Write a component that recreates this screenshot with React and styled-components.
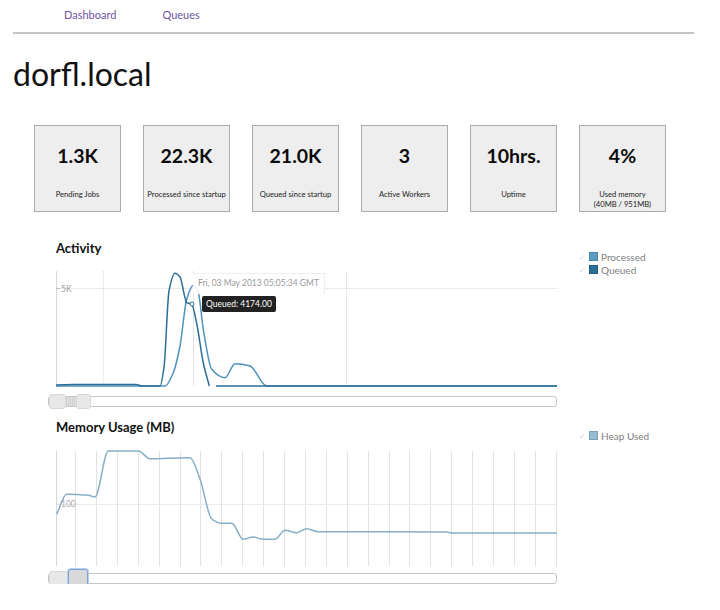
import React from "react";
import styled, { createGlobalStyle } from "styled-components";

const Global = createGlobalStyle`
    body {
        margin: 0;
        background: #fff;
        font-family: Lato, "Open Sans", sans-serif;
        color: #111;
    }
`;

const Page = styled.div`
    width: 681px;
    padding-left: 13px;
`;

const Nav = styled.nav`
    display: flex;
    height: 32px;
    align-items: center;
    padding-left: 51px;
    gap: 46px;
    border-bottom: 2px solid #c4c4c4;
    a {
        font-size: 11px;
        color: #6d54a1;
        text-decoration: none;
        margin-top: -3px;
    }
`;

const Title = styled.h1`
    margin: 20px 0 0;
    font-size: 32px;
    font-weight: 400;
    line-height: 40px;
    color: #111;
`;

const Stats = styled.div`
    display: flex;
    gap: 22px;
    margin: 31px 0 0 21px;
`;

const Card = styled.div`
    width: 87px;
    height: 87px;
    box-sizing: border-box;
    background: #eeeeee;
    border: 1px solid #ababab;
    display: flex;
    flex-direction: column;
    align-items: center;
    text-align: center;
    .value {
        font-size: 19.5px;
        font-weight: 700;
        margin-top: 19px;
        line-height: 22px;
        color: #0c0c0c;
    }
    .label {
        font-size: 7.6px;
        line-height: 10px;
        margin-top: 22px;
        color: #222;
    }
`;

const Section = styled.section`
    display: flex;
    margin: ${(p) => p.top}px 0 0 43px;
`;

const Main = styled.div`
    width: 501px;
`;

const Heading = styled.h3`
    margin: 0;
    font-size: 13px;
    font-weight: 700;
    line-height: 16px;
`;

const ChartBox = styled.div`
    position: relative;
    height: 116px;
    margin-top: ${(p) => p.gap}px;
    svg {
        display: block;
        overflow: visible;
    }
`;

const DateTip = styled.div`
    position: absolute;
    left: 137px;
    top: 2px;
    padding: 0 5px;
    height: 20px;
    line-height: 19px;
    font-size: 8.5px;
    color: #999;
    background: rgba(255, 255, 255, 0.9);
    border-top: 1px solid #eee;
    border-right: 1px solid #eee;
    white-space: nowrap;
`;

const ValueTip = styled.div`
    position: absolute;
    left: 146px;
    top: 25px;
    height: 16px;
    padding: 0 4px;
    line-height: 16px;
    font-size: 8.5px;
    color: #fff;
    background: #222;
    border-radius: 2px;
    white-space: nowrap;
`;

const Track = styled.div`
    display: flex;
    align-items: center;
    height: 9px;
    width: 507px;
    margin: ${(p) => p.top}px 0 0 -8px;
    border: 1px solid #c6c6c6;
    border-radius: 3px;
    background: #fff;
`;

const Handle = styled.div`
    width: ${(p) => p.w}px;
    height: ${(p) => (p.active ? 19 : 15)}px;
    margin: ${(p) => (p.active ? -5 : -3)}px 0;
    box-sizing: border-box;
    background: ${(p) => (p.active ? "#d9d9d9" : "#e8e8e8")};
    border: 1px solid ${(p) => (p.active ? "#7ea3d6" : "#d8d8d8")};
    box-shadow: ${(p) => (p.active ? "0 0 0 1px #b9cfee" : "none")};
    border-radius: 3px;
`;

const Range = styled.div`
    width: ${(p) => p.w}px;
    height: 9px;
    background: repeating-linear-gradient(90deg, #cfcfcf 0 1px, #e2e2e2 1px 2px);
`;

const Legend = styled.ul`
    list-style: none;
    margin: 10px 0 0 22px;
    padding: 0;
    li {
        display: flex;
        align-items: center;
        height: 13px;
        font-size: 10px;
        color: #808080;
    }
    .check {
        width: 10px;
        font-size: 8px;
        color: #d8d8d8;
    }
    .swatch {
        width: 9px;
        height: 9px;
        margin-right: 3px;
        box-sizing: border-box;
        border: 1px solid rgba(0, 0, 0, 0.15);
    }
`;

// monotone-x curve, like d3's, so flat runs stay flat
const monotone = (pts) => {
    const n = pts.length;
    const dx = [];
    const m = [];
    for (let i = 0; i < n - 1; i++) {
        dx[i] = pts[i + 1][0] - pts[i][0];
        m[i] = (pts[i + 1][1] - pts[i][1]) / dx[i];
    }
    const t = [m[0]];
    for (let i = 1; i < n - 1; i++) {
        if (m[i - 1] * m[i] <= 0) t[i] = 0;
        else
            t[i] =
                (3 * (dx[i - 1] + dx[i])) /
                ((2 * dx[i] + dx[i - 1]) / m[i - 1] + (dx[i] + 2 * dx[i - 1]) / m[i]);
    }
    t[n - 1] = m[n - 2];
    let d = `M${pts[0][0]},${pts[0][1]}`;
    for (let i = 0; i < n - 1; i++) {
        const [x0, y0] = pts[i];
        const [x1, y1] = pts[i + 1];
        const h = dx[i] / 3;
        d += ` C${(x0 + h).toFixed(1)},${(y0 + t[i] * h).toFixed(1)} ${(x1 - h).toFixed(1)},${(y1 - t[i + 1] * h).toFixed(1)} ${x1},${y1}`;
    }
    return d;
};

const queued = [
    [0, 114], [17, 113.4], [80, 113.4], [86, 115], [104, 115], [108, 96],
    [113, 20], [119, 2.3], [124, 6], [130.7, 31.7], [135.7, 33.3],
    [141, 54], [147.3, 92], [153.3, 115],
];
const processed = [
    [0, 115], [109, 115], [117.3, 101.7], [124, 75], [130.7, 28.3],
    [137.3, 14.3], [142.3, 21.7], [147.3, 58.3], [155.7, 98.3],
    [169, 106.7], [179, 92.7], [194, 95], [210.7, 115], [501, 115],
];
const heap = [
    [0.7, 63.3], [10.7, 43.3], [32.3, 44.3], [39, 46], [52.3, 0], [82.3, 0],
    [94, 7.7], [130.7, 6.7], [134, 6.7], [144, 28], [155.7, 68], [165.7, 72.3],
    [175.7, 72.3], [187.3, 88.3], [197.3, 86], [207.3, 88.3], [219, 88.3],
    [229, 79.3], [240.7, 81.7], [250.7, 77.7], [262.3, 80.7], [390.7, 81],
    [395.7, 82], [501, 82],
];

const stats = [
    { value: "1.3K", label: "Pending Jobs" },
    { value: "22.3K", label: "Processed since startup" },
    { value: "21.0K", label: "Queued since startup" },
    { value: "3", label: "Active Workers" },
    { value: "10hrs.", label: "Uptime" },
    { value: "4%", label: ["Used memory", "(40MB / 951MB)"] },
];

const ActivityChart = () => (
    <ChartBox gap={15}>
        <svg width="501" height="116">
            <line x1="47.5" y1="0" x2="47.5" y2="115" stroke="#ddd" strokeDasharray="1 1" />
            <line x1="290.5" y1="0" x2="290.5" y2="115" stroke="#e8e8e8" />
            <line x1="0" y1="17.5" x2="501" y2="17.5" stroke="#eaeaea" />
            <line x1="0.5" y1="0" x2="0.5" y2="115" stroke="#d8d8d8" />
            <line x1="0" y1="17.5" x2="4" y2="17.5" stroke="#bbb" />
            <text x="5" y="20.5" fontSize="8.5" fill="#999" fontFamily="Lato">5K</text>
            <line x1="137.5" y1="0" x2="137.5" y2="115" stroke="#e2e2e2" />
            <path d={monotone(processed)} fill="none" stroke="#4d93bd" strokeWidth="1.5" />
            <path d={monotone(queued)} fill="none" stroke="#2b6e96" strokeWidth="1.5" />
            <line x1="160" y1="115" x2="501" y2="115" stroke="#2b6e96" strokeWidth="1.5" />
            <circle cx="136" cy="33" r="2" fill="#fff" stroke="#2b6e96" />
        </svg>
        <DateTip>Fri, 03 May 2013 05:05:34 GMT</DateTip>
        <ValueTip>Queued: 4174.00</ValueTip>
    </ChartBox>
);

const MemoryChart = () => (
    <ChartBox gap={16}>
        <svg width="501" height="116">
            {Array.from({ length: 24 }, (_, k) => {
                const x = Math.round(19 + k * 20.9) + 0.5;
                return <line key={k} x1={x} y1="0" x2={x} y2="115" stroke="#e2e2e2" />;
            })}
            <line x1="0" y1="53.5" x2="501" y2="53.5" stroke="#eaeaea" />
            <line x1="0.5" y1="0" x2="0.5" y2="115" stroke="#d8d8d8" />
            <text x="5" y="56" fontSize="8.5" fill="#aaa" fontFamily="Lato">100</text>
            <path d={monotone(heap)} fill="none" stroke="#86afc8" strokeWidth="1.5" />
        </svg>
    </ChartBox>
);

const App = () => {
    return (
        <Page>
            <Global />
            <Nav>
                <a href="#">Dashboard</a>
                <a href="#">Queues</a>
            </Nav>
            <Title>dorfl.local</Title>
            <Stats>
                {stats.map((s) => (
                    <Card key={s.value}>
                        <div className="value">{s.value}</div>
                        <div className="label">
                            {[].concat(s.label).map((l) => (
                                <div key={l}>{l}</div>
                            ))}
                        </div>
                    </Card>
                ))}
            </Stats>
            <Section top={28}>
                <Main>
                    <Heading>Activity</Heading>
                    <ActivityChart />
                    <Track top={9}>
                        <Handle w={17} />
                        <Range w={10} />
                        <Handle w={15} />
                    </Track>
                </Main>
                <Legend>
                    <li>
                        <span className="check">✓</span>
                        <span className="swatch" style={{ background: "#5b9dc4" }} />
                        Processed
                    </li>
                    <li>
                        <span className="check">✓</span>
                        <span className="swatch" style={{ background: "#2a6f96" }} />
                        Queued
                    </li>
                </Legend>
            </Section>
            <Section top={12}>
                <Main>
                    <Heading>Memory Usage (MB)</Heading>
                    <MemoryChart />
                    <Track top={6}>
                        <Handle w={19} />
                        <Handle w={20} active />
                    </Track>
                </Main>
                <Legend>
                    <li>
                        <span className="check">✓</span>
                        <span className="swatch" style={{ background: "#93bcd6" }} />
                        Heap Used
                    </li>
                </Legend>
            </Section>
        </Page>
    );
};

export default App;
